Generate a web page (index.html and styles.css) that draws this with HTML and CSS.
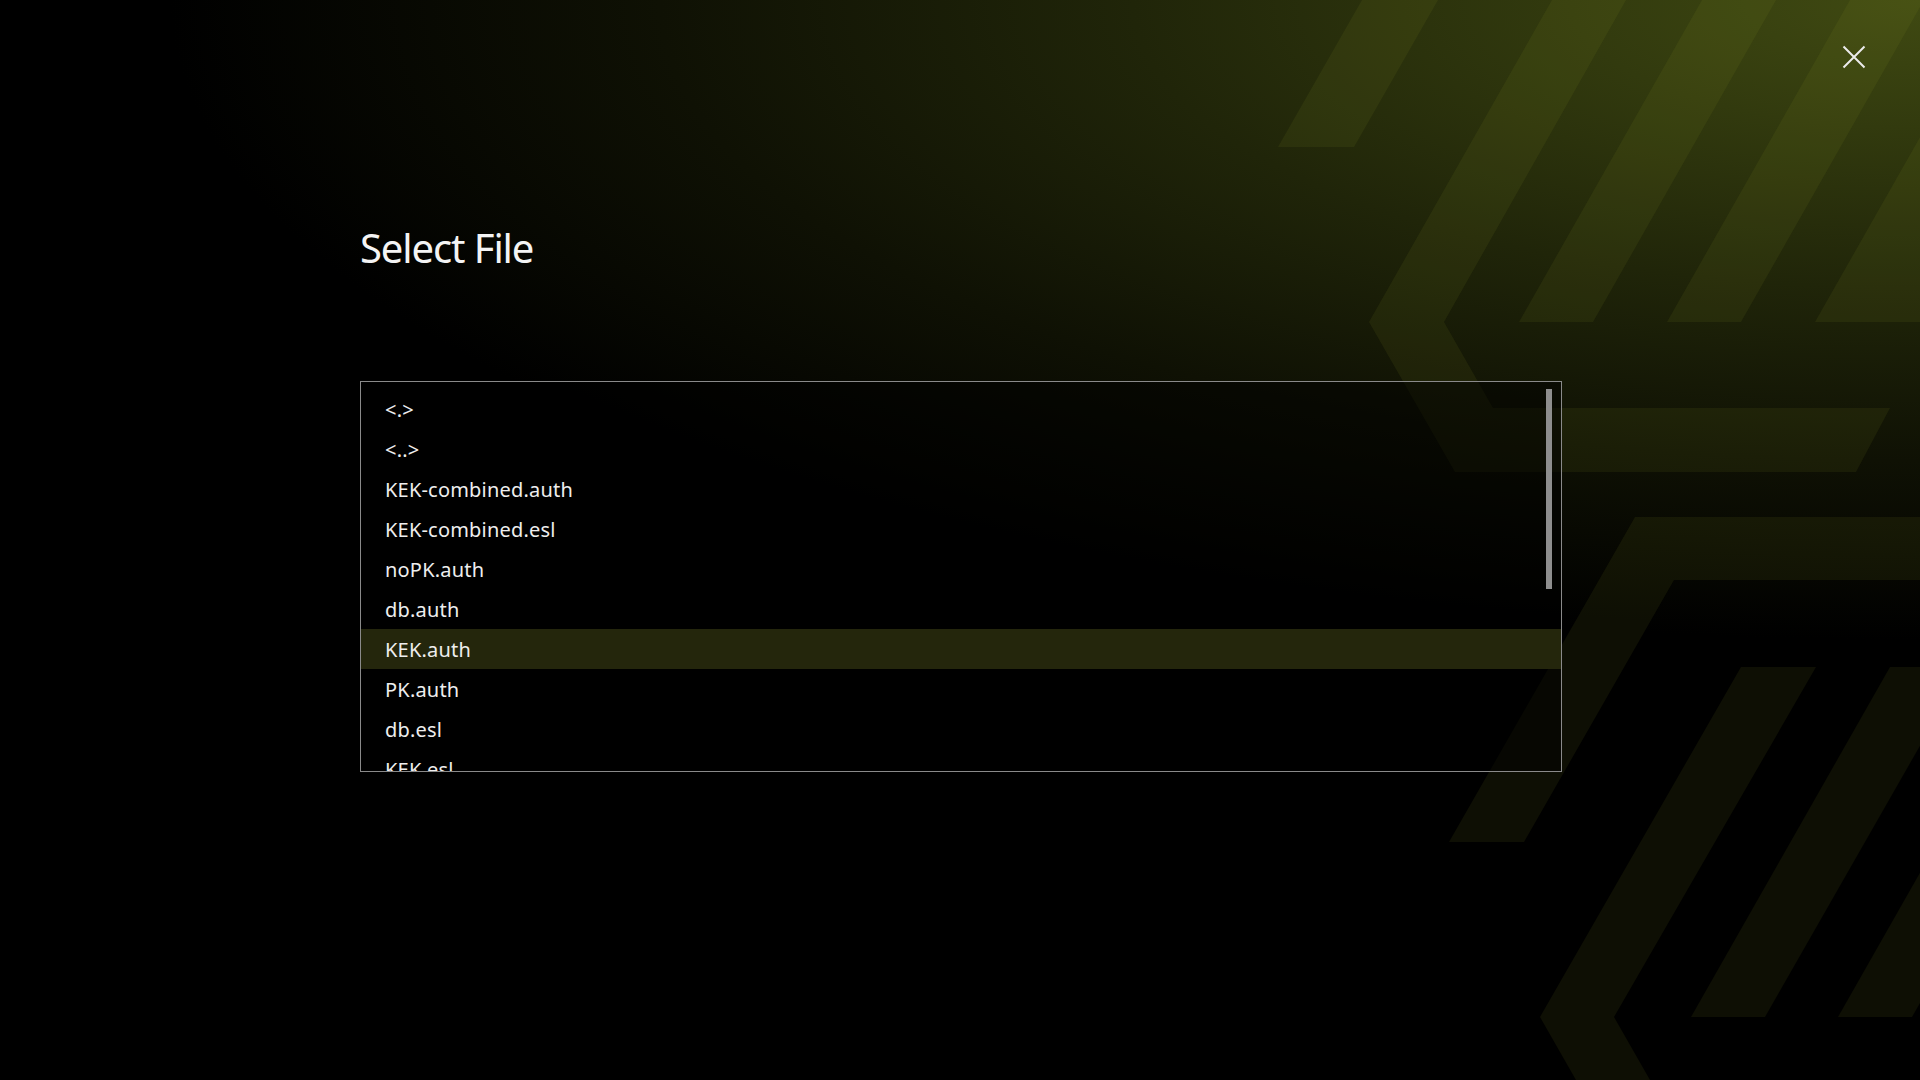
FILE: index.html
```html
<!DOCTYPE html>
<html lang="en">
<head>
<meta charset="utf-8">
<title>Select File</title>
<link rel="stylesheet" href="styles.css">
</head>
<body>
<svg class="bg-art" width="1920" height="1080" viewBox="0 0 1920 1080" aria-hidden="true">
  <g class="shape">
    <polygon points="1362,0 1438,0 1354,147 1278,147"/>
    <polygon points="1552,0 1626,0 1444,322 1493,408 1890,408 1856,472 1455,472 1369,322"/>
    <polygon points="1702,0 1776,0 1593,322 1519,322"/>
    <polygon points="1850,0 1924,0 1741,322 1667,322"/>
    <polygon points="1998,0 2100,0 2100,322 1815,322"/>
    <polygon points="1635,517 1960,517 1960,580 1674,580 1524,842 1449,842"/>
    <polygon points="1741,667 1816,667 1614,1017 1650,1080 1576,1080 1540,1017"/>
    <polygon points="1890,667 1965,667 1765,1017 1691,1017"/>
    <polygon points="2037,667 2111,667 1912,1017 1838,1017"/>
  </g>
</svg>

<button class="close" type="button" aria-label="Close">
  <svg width="26" height="26" viewBox="0 0 26 26"><path d="M2.5 2.5 L23.5 23.5 M23.5 2.5 L2.5 23.5"/></svg>
</button>

<main class="dialog">
  <h1 class="title">Select File</h1>
  <div class="file-list">
    <ul class="rows">
      <li class="row">&lt;.&gt;</li>
      <li class="row">&lt;..&gt;</li>
      <li class="row">KEK-combined.auth</li>
      <li class="row">KEK-combined.esl</li>
      <li class="row">noPK.auth</li>
      <li class="row">db.auth</li>
      <li class="row selected">KEK.auth</li>
      <li class="row">PK.auth</li>
      <li class="row">db.esl</li>
      <li class="row">KEK.esl</li>
    </ul>
    <div class="scroll-thumb"></div>
  </div>
</main>
</body>
</html>
```

FILE: styles.css
```css
html, body {
  margin: 0;
  padding: 0;
}

body {
  width: 1920px;
  height: 1080px;
  overflow: hidden;
  position: relative;
  font-family: "Noto Sans", "Open Sans", "DejaVu Sans", sans-serif;
  color: #f0f0f0;
  background:
    radial-gradient(ellipse 1750px 640px at 1920px 0px,
      rgb(64, 74, 18) 0%,
      rgb(50, 58, 14) 20%,
      rgb(32, 37, 9) 45%,
      rgb(15, 17, 4) 72%,
      rgb(0, 0, 0) 100%),
    #000;
}

.bg-art {
  position: absolute;
  left: 0;
  top: 0;
  display: block;
}

.bg-art .shape polygon {
  fill: rgba(150, 170, 40, 0.09);
}

.close {
  position: absolute;
  top: 44px;
  right: 53px;
  width: 26px;
  height: 26px;
  padding: 0;
  border: 0;
  background: none;
  cursor: pointer;
}

.close svg {
  display: block;
}

.close path {
  stroke: #ececec;
  stroke-width: 2;
  fill: none;
}

.dialog {
  position: relative;
  padding: 224px 0 0 360px;
}

.title {
  margin: 0;
  font-size: 40px;
  line-height: 48px;
  font-weight: 400;
  letter-spacing: -1.1px;
  color: #f4f4f4;
}

.file-list {
  position: relative;
  margin-top: 109px;
  width: 1202px;
  height: 391px;
  box-sizing: border-box;
  border: 1px solid #8a8a8a;
  padding-top: 7px;
  overflow: hidden;
  background: rgba(0, 0, 0, 0.5);
}

.rows {
  list-style: none;
  margin: 0;
  padding: 0;
}

.row {
  box-sizing: border-box;
  height: 40px;
  padding-top: 2px;
  line-height: 38px;
  padding-left: 24px;
  font-size: 20px;
  letter-spacing: 0.2px;
  color: #eeeeee;
  white-space: nowrap;
}

.row.selected {
  background: #24260c;
}

.scroll-thumb {
  position: absolute;
  top: 7px;
  right: 9px;
  width: 6px;
  height: 200px;
  background: #8e8e8e;
}
```
